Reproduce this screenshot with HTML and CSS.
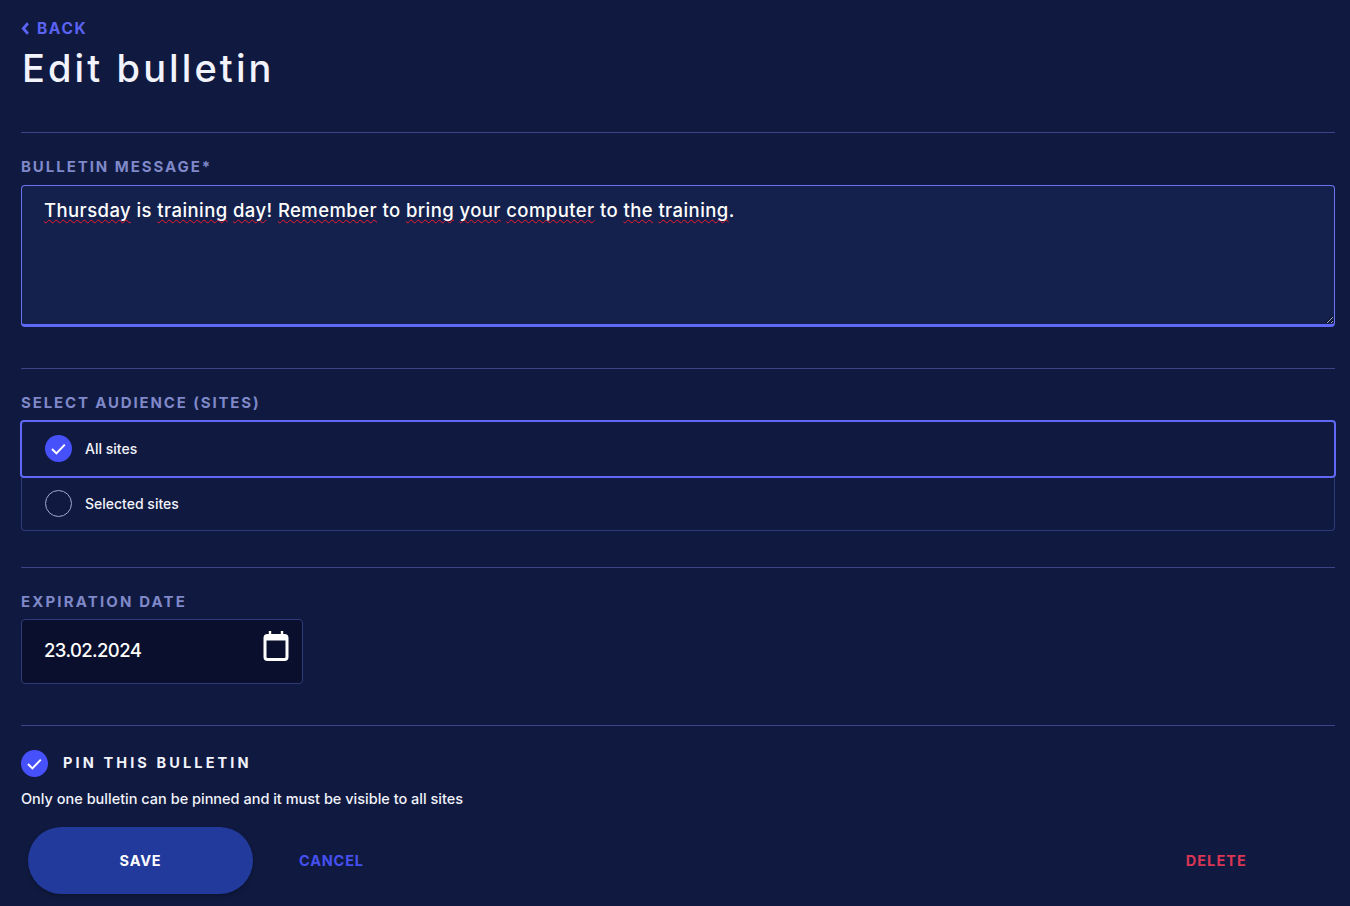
FILE: index.html
```html
<!DOCTYPE html>
<html lang="en">
<head>
<meta charset="utf-8">
<title>Edit bulletin</title>
<link rel="stylesheet" href="styles.css">
</head>
<body>
<main class="page">
  <header class="head">
    <a class="back" href="#">
      <svg class="back-icon" viewBox="0 0 8 12" width="9" height="13"><path d="M6.2 1.2 2 6l4.2 4.8" fill="none" stroke="currentColor" stroke-width="2.6"/></svg>
      <span>BACK</span>
    </a>
    <h1 class="title">Edit bulletin</h1>
  </header>

  <section class="section section-message">
    <label class="label">BULLETIN MESSAGE*</label>
    <div class="message"><span class="sp">Thursday</span> is <span class="sp">training</span> <span class="sp">day</span>! <span class="sp">Remember</span> to <span class="sp">bring</span> <span class="sp">your</span> <span class="sp">computer</span> to <span class="sp">the</span> <span class="sp">training</span>.</div>
  </section>

  <section class="section section-audience">
    <label class="label label-audience">SELECT AUDIENCE (SITES)</label>
    <div class="options">
      <div class="option option-on">
        <span class="check"><svg viewBox="0 0 27 27" width="27" height="27"><path d="M7 14l4.4 4.4 8.4-8.8" fill="none" stroke="#fff" stroke-width="2"/></svg></span>
        <span>All sites</span>
      </div>
      <div class="option option-off">
        <span class="radio"></span>
        <span>Selected sites</span>
      </div>
    </div>
  </section>

  <section class="section section-date">
    <label class="label label-date">EXPIRATION DATE</label>
    <div class="date">
      <span class="date-value">23.02.2024</span>
      <svg class="cal" viewBox="0 0 28 32" width="28" height="32"><path d="M8 1v5M20 1v5" stroke="#fff" stroke-width="2.4" fill="none"/><rect x="3" y="5.5" width="22" height="24" rx="2.5" fill="none" stroke="#fff" stroke-width="3"/><rect x="3" y="5.5" width="22" height="5" fill="#fff"/></svg>
    </div>
  </section>

  <section class="section section-pin">
    <div class="pin">
      <span class="check"><svg viewBox="0 0 27 27" width="27" height="27"><path d="M7 14l4.4 4.4 8.4-8.8" fill="none" stroke="#fff" stroke-width="2"/></svg></span>
      <span class="pin-label">PIN THIS BULLETIN</span>
    </div>
    <p class="hint">Only one bulletin can be pinned and it must be visible to all sites</p>
    <div class="actions">
      <button class="save" type="button">SAVE</button>
      <a class="cancel" href="#">CANCEL</a>
      <a class="delete" href="#">DELETE</a>
    </div>
  </section>
</main>
</body>
</html>
```

FILE: styles.css
```css
* { box-sizing: border-box; }
html, body { margin: 0; height: 100%; }
body {
  background: #101a40;
  color: #fff;
  font-family: "Inter", "Liberation Sans", sans-serif;
  overflow: hidden;
}
.page { padding: 0 15px 0 21px; height: 906px; }
.head { height: 132px; padding-top: 18px; }
.back {
  display: flex;
  align-items: center;
  gap: 7px;
  height: 20px;
  color: #5a63f5;
  font-size: 15.5px;
  font-weight: 700;
  letter-spacing: 1.6px;
  text-decoration: none;
}
.title {
  margin: 0;
  padding-left: 1px;
  font-size: 38px;
  line-height: 60px;
  font-weight: 500;
  letter-spacing: 3.1px;
  color: #f2f3fc;
}
.section { border-top: 1px solid #3a4487; }
.section-message { height: 236px; padding-top: 25px; }
.section-audience { height: 199px; padding-top: 25px; }
.section-date { height: 158px; padding-top: 25px; }
.section-pin { padding-top: 24px; }
.label {
  display: block;
  height: 17px;
  line-height: 17px;
  font-size: 15px;
  font-weight: 700;
  letter-spacing: 1.95px;
  color: #7f88c8;
}
.label-audience { letter-spacing: 1.86px; }
.label-date { letter-spacing: 2.15px; }
.message {
  margin-top: 10px;
  height: 142px;
  padding: 11px 22px;
  background: #15214d;
  border: 1px solid #6a73ee;
  border-bottom: 3px solid #5f69f5;
  border-radius: 4px;
  font-size: 18.5px;
  font-weight: 500;
  line-height: 26px;
  letter-spacing: 0.42px;
  color: #fff;
  overflow: auto;
  resize: vertical;
}
.sp {
  text-decoration: underline wavy #ee1c2c 1px;
  text-underline-offset: 2px;
  text-decoration-skip-ink: none;
}
.options { margin-top: 9px; font-size: 14px; font-weight: 500; color: #f2f3fc; }
.option {
  display: flex;
  align-items: center;
  gap: 13px;
  padding-left: 23px;
}
.option-on {
  height: 58px;
  margin-left: -1px;
  margin-right: -1px;
  padding-bottom: 1px;
  border: 2px solid #6069f5;
  border-radius: 4px;
  background: #101a40;
}
.option-off {
  height: 53px;
  padding-left: 23px;
  padding-bottom: 2px;
  border: 1px solid #2f3a78;
  border-top: 0;
  border-radius: 0 0 4px 4px;
}
.check {
  flex: none;
  display: block;
  width: 27px;
  height: 27px;
  border-radius: 50%;
  background: #4650fb;
}
.check svg { display: block; }
.radio {
  flex: none;
  width: 27px;
  height: 27px;
  border-radius: 50%;
  border: 1px solid #a3a8cb;
}
.date {
  display: flex;
  align-items: center;
  justify-content: space-between;
  margin-top: 9px;
  width: 282px;
  height: 65px;
  padding: 0 12px 3px 22px;
  background: #0a0f2e;
  border: 1px solid #2f3a78;
  border-radius: 4px;
  font-size: 18.5px;
  font-weight: 500;
  letter-spacing: -0.6px;
}
.cal { margin-top: -9px; }
.pin { display: flex; align-items: center; gap: 15px; height: 27px; }
.pin-label {
  position: relative;
  top: -1px;
  font-size: 14.5px;
  font-weight: 700;
  letter-spacing: 3.12px;
  color: #f2f3fc;
}
.hint {
  margin: 12px 0 0;
  font-size: 14.5px;
  font-weight: 500;
  line-height: 20px;
  color: #f2f3fc;
}
.actions {
  display: flex;
  align-items: center;
  margin-top: 18px;
  padding: 0 88px 0 7px;
}
.save {
  width: 225px;
  height: 67px;
  border: 0;
  border-radius: 34px;
  background: #223a9c;
  color: #fff;
  font: 700 14.5px "Inter", "Liberation Sans", sans-serif;
  letter-spacing: 0.8px;
  box-shadow: 0 2px 4px rgba(0, 0, 0, .25);
  padding: 0 0 1px;
}
.cancel, .delete {
  font-size: 14.5px;
  font-weight: 700;
  letter-spacing: 0.8px;
  text-decoration: none;
}
.cancel { margin-left: 46px; color: #4650f0; }
.delete { margin-left: auto; letter-spacing: 1.1px; color: #d93554; }
```
